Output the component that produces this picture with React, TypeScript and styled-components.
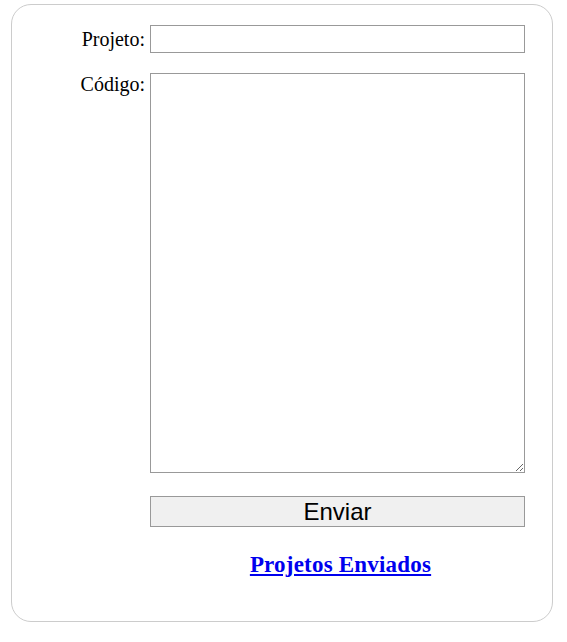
import React from "react";
import styled, { createGlobalStyle } from "styled-components";

const Global = createGlobalStyle`
  html, body { margin: 0; padding: 0; background: #ffffff; }
  body { font-family: "Liberation Serif", "Times New Roman", serif; }
`;

const Card = styled.form`
  box-sizing: border-box;
  margin: 4px 0 0 11px;
  width: 542px;
  height: 618px;
  border: 1px solid #cccccc;
  border-radius: 20px;
  padding: 20px 0 0 0;
  display: flex;
  flex-direction: column;
`;

const Row = styled.div<{ $gap: number }>`
  display: grid;
  grid-template-columns: 133px 375px;
  column-gap: 5px;
  margin-bottom: ${(p) => p.$gap}px;
`;

const Label = styled.label<{ $offset: number }>`
  text-align: right;
  font-family: "Liberation Serif", "Times New Roman", serif;
  font-size: 20px;
  line-height: 23px;
  color: #000;
  padding-top: ${(p) => p.$offset}px;
`;

const TextInput = styled.input`
  box-sizing: border-box;
  width: 375px;
  height: 28px;
  margin: 0;
  border: 1px solid #999999;
  padding: 2px 4px;
  font-family: "Liberation Sans", Arial, sans-serif;
  font-size: 16px;
  outline: none;
`;

const CodeArea = styled.textarea`
  box-sizing: border-box;
  width: 375px;
  height: 400px;
  margin: 0;
  border: 1px solid #999999;
  padding: 2px;
  font-family: "Liberation Mono", monospace;
  font-size: 13px;
  display: block;
  outline: none;
`;

const SendButton = styled.button`
  grid-column: 2;
  box-sizing: border-box;
  width: 375px;
  height: 31px;
  margin: 0;
  border: 1px solid #999999;
  background: #f0f0f0;
  color: #000;
  font-family: "Liberation Sans", Arial, sans-serif;
  font-size: 24px;
  line-height: 29px;
  padding: 0;
`;

const LinkCell = styled.div`
  grid-column: 2;
  text-align: center;
  padding-left: 6px;
  padding-top: 1px;
`;

const SentLink = styled.a`
  font-family: "Liberation Serif", "Times New Roman", serif;
  font-weight: bold;
  font-size: 23px;
  line-height: 27px;
  letter-spacing: 0.2px;
  color: #0000ee;
  text-decoration: underline;
`;

export default function App() {
  return (
    <>
      <Global />
      <Card onSubmit={(e) => e.preventDefault()}>
        <Row $gap={20}>
          <Label $offset={3} htmlFor="projeto">Projeto:</Label>
          <TextInput id="projeto" type="text" />
        </Row>
        <Row $gap={23}>
          <Label $offset={0} htmlFor="codigo">Código:</Label>
          <CodeArea id="codigo" />
        </Row>
        <Row $gap={23}>
          <SendButton type="submit">Enviar</SendButton>
        </Row>
        <Row $gap={0}>
          <LinkCell>
            <SentLink href="#">Projetos Enviados</SentLink>
          </LinkCell>
        </Row>
      </Card>
    </>
  );
}
